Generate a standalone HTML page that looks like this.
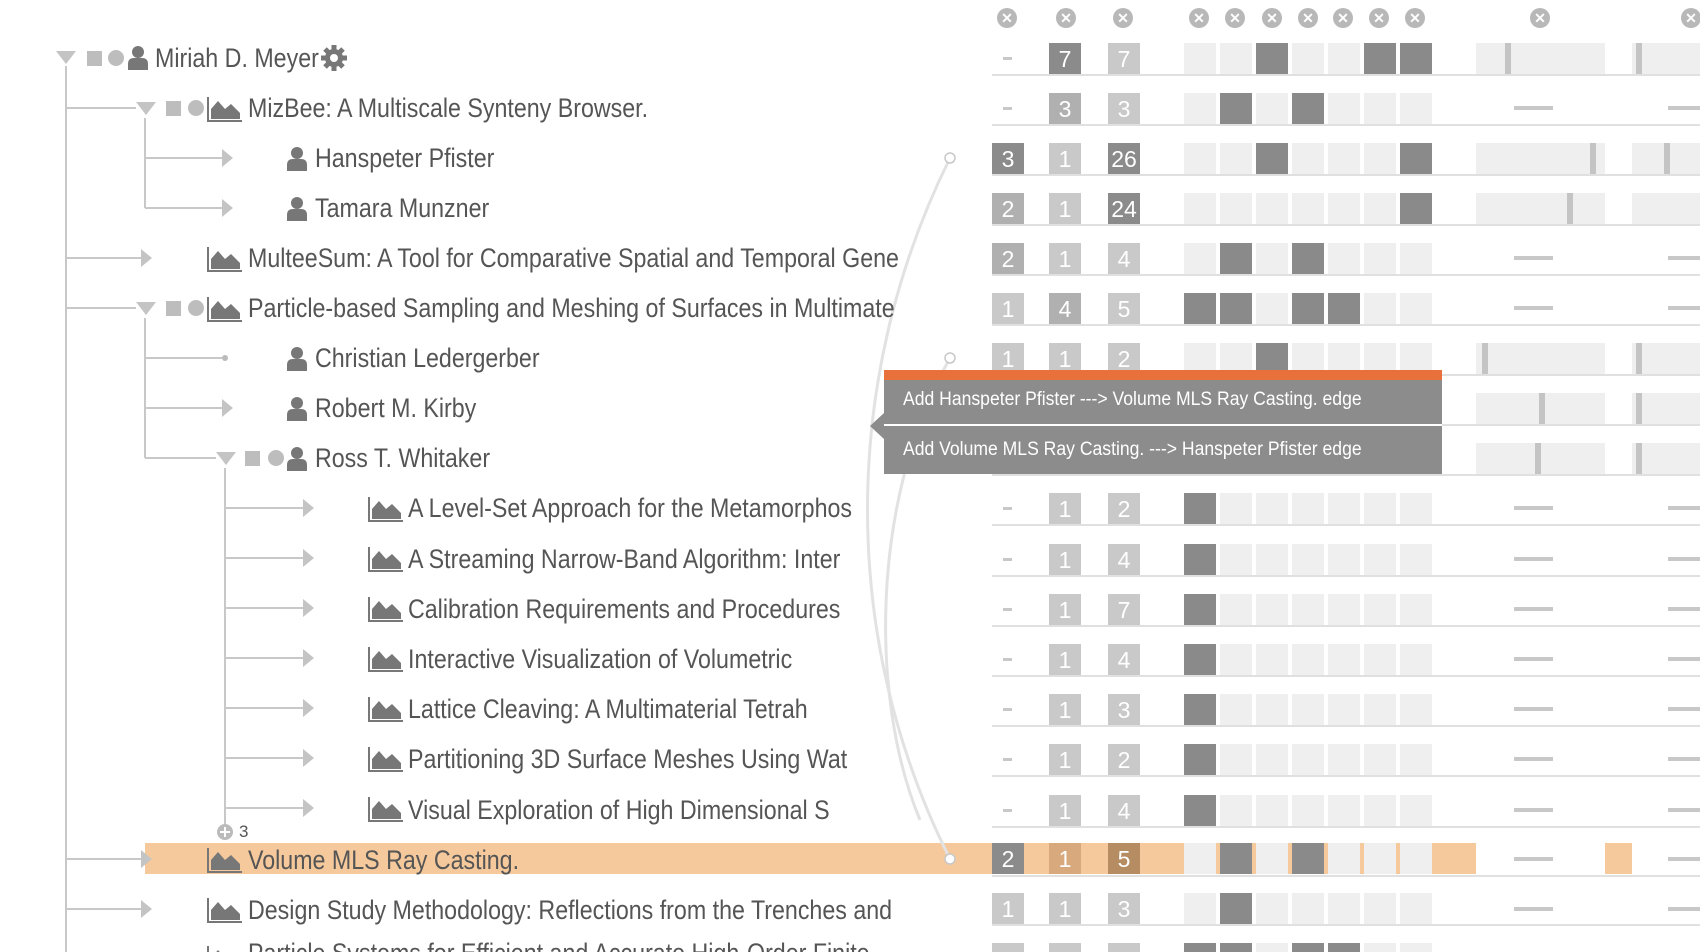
<!DOCTYPE html>
<html style="height:952px;overflow:hidden"><head><meta charset="utf-8"><style>
*{margin:0;padding:0;box-sizing:border-box}
body{width:1700px;height:952px;background:#fff;position:relative;overflow:hidden;font-family:"Liberation Sans Narrow","Liberation Sans",sans-serif;color:#555}
.a{position:absolute}
.t{position:absolute;font-size:27px;line-height:30px;white-space:nowrap;color:#555;transform:scaleX(0.86);transform-origin:0 50%}
.ar{position:absolute;width:0;height:0;border-top:9px solid transparent;border-bottom:9px solid transparent;border-left:11px solid #c4c4c4}
.dn{position:absolute;width:0;height:0;border-left:10px solid transparent;border-right:10px solid transparent;border-top:13px solid #c4c4c4}
.sq{position:absolute;width:15px;height:15px;background:#bdbdbd}
.ci{position:absolute;width:16px;height:16px;border-radius:50%;background:#bdbdbd}
.b{position:absolute;width:32px;height:31px;color:#fff;font-size:23px;line-height:33px;text-align:center}
.c{position:absolute;width:32px;height:31px;background:#efefef}
.d{background:#8a8a8a}
.L{background:#c9c9c9}.M{background:#b0b0b0}.D{background:#8b8b8b}
.ul{position:absolute;left:992px;width:708px;height:2px;background:#e0e0e0}
.rb{position:absolute;height:31px;background:#efefef}
.tk{position:absolute;width:6px;height:31px;background:#c4c4c4}
.ds{position:absolute;height:4px;background:#c8c8c8}
.mn{position:absolute;width:9px;height:3px;background:#c8c8c8}
.x{position:absolute;width:20px;height:20px;border-radius:50%;background:#b8b8b8;color:#fff;font:bold 14px/20px "Liberation Sans",sans-serif;text-align:center}
.tt{position:absolute;left:903px;color:#fff;font-size:19px;line-height:24px;white-space:nowrap;transform:scaleX(0.925);transform-origin:0 50%}
.lr{position:absolute;height:9px}
</style></head><body>

<div class="x" style="left:997px;top:8px">✕</div>
<div class="x" style="left:1056px;top:8px">✕</div>
<div class="x" style="left:1113px;top:8px">✕</div>
<div class="x" style="left:1189px;top:8px">✕</div>
<div class="x" style="left:1225px;top:8px">✕</div>
<div class="x" style="left:1262px;top:8px">✕</div>
<div class="x" style="left:1298px;top:8px">✕</div>
<div class="x" style="left:1333px;top:8px">✕</div>
<div class="x" style="left:1369px;top:8px">✕</div>
<div class="x" style="left:1405px;top:8px">✕</div>
<div class="x" style="left:1530px;top:8px">✕</div>
<div class="x" style="left:1681px;top:8px">✕</div>

<div class="a" style="left:145px;top:843px;width:1331px;height:31px;background:#f5c99c"></div>
<div class="a" style="left:1605px;top:843px;width:27px;height:31px;background:#f5c99c"></div>

<svg class="a" style="left:0;top:0" width="1700" height="952">
<path d="M950 158 C 840 380, 840 640, 950 859" fill="none" stroke="#e2e2e2" stroke-width="3"/>
<path d="M950 358 C 870 500, 870 700, 920 820" fill="none" stroke="#e2e2e2" stroke-width="3"/>
<circle cx="950" cy="158" r="5" fill="#fff" stroke="#c8c8c8" stroke-width="1.5"/>
<circle cx="950" cy="358" r="5" fill="#fff" stroke="#c8c8c8" stroke-width="1.5"/>
<circle cx="950" cy="859" r="5" fill="#fff" stroke="#c8c8c8" stroke-width="1.5"/>
<defs>
<g id="per"><circle cx="10" cy="6" r="6" fill="#777"/><path d="M0 24 V18 Q0 12 6 12 H14 Q20 12 20 18 V24 Z" fill="#777"/></g>
<g id="pap"><path d="M2 2 V26 H36" fill="none" stroke="#777" stroke-width="2"/><path d="M5 24 V14 L12 6 L19 14 L25 9 L34 18 V24 Z" fill="#777"/></g>
</defs>
<g stroke="#c8c8c8" stroke-width="2" fill="none">
<path d="M66 66 V952"/>
<path d="M66 108 H136 M66 258 H142 M66 308 H136 M66 859 H142 M66 909 H142 M145 118 V208 M145 158 H222 M145 208 H222 M145 318 V458 M145 358 H222 M145 408 H222 M145 458 H216 M225 468 V824 M225 508 H303 M225 558 H303 M225 608 H303 M225 658 H303 M225 708 H303 M225 758 H303 M225 808 H303"/>
</g>
<use href="#per" x="128" y="46"/>
<use href="#per" x="287" y="147"/>
<use href="#per" x="287" y="197"/>
<use href="#per" x="287" y="347"/>
<use href="#per" x="287" y="397"/>
<use href="#per" x="287" y="447"/>
<use href="#pap" x="206" y="95"/>
<use href="#pap" x="206" y="245"/>
<use href="#pap" x="206" y="295"/>
<use href="#pap" x="367" y="495"/>
<use href="#pap" x="367" y="545"/>
<use href="#pap" x="367" y="595"/>
<use href="#pap" x="367" y="645"/>
<use href="#pap" x="367" y="695"/>
<use href="#pap" x="367" y="745"/>
<use href="#pap" x="367" y="795"/>
<use href="#pap" x="206" y="846"/>
<use href="#pap" x="206" y="896"/>
<use href="#pap" x="206" y="944"/>
<g transform="translate(334 58)" fill="#777"><circle r="9"/><g stroke="#777" stroke-width="5"><path d="M0 -13 V13 M-13 0 H13 M-9 -9 L9 9 M-9 9 L9 -9"/></g><circle r="4" fill="#fff"/></g>
<circle cx="225" cy="832" r="8" fill="#bbb"/><path d="M220 832 H230 M225 827 V837" stroke="#fff" stroke-width="2"/>
</svg>

<div class="dn" style="left:56px;top:51px"></div>
<div class="dn" style="left:136px;top:102px"></div>
<div class="dn" style="left:136px;top:302px"></div>
<div class="dn" style="left:216px;top:452px"></div>
<div class="ar" style="left:141px;top:249px"></div>
<div class="ar" style="left:141px;top:850px"></div>
<div class="ar" style="left:141px;top:900px"></div>
<div class="ar" style="left:222px;top:149px"></div>
<div class="ar" style="left:222px;top:199px"></div>
<div class="ar" style="left:222px;top:399px"></div>
<div class="a" style="left:222px;top:355px;width:6px;height:6px;border-radius:50%;background:#bbb"></div>
<div class="ar" style="left:303px;top:499px"></div>
<div class="ar" style="left:303px;top:549px"></div>
<div class="ar" style="left:303px;top:599px"></div>
<div class="ar" style="left:303px;top:649px"></div>
<div class="ar" style="left:303px;top:699px"></div>
<div class="ar" style="left:303px;top:749px"></div>
<div class="ar" style="left:303px;top:799px"></div>
<div class="sq" style="left:87px;top:51px"></div><div class="ci" style="left:108px;top:50px"></div>
<div class="sq" style="left:166px;top:101px"></div><div class="ci" style="left:188px;top:100px"></div>
<div class="sq" style="left:166px;top:301px"></div><div class="ci" style="left:188px;top:300px"></div>
<div class="sq" style="left:245px;top:451px"></div><div class="ci" style="left:268px;top:450px"></div>

<div class="t" style="left:155px;top:43px">Miriah D. Meyer</div>
<div class="t" style="left:248px;top:93px">MizBee: A Multiscale Synteny Browser.</div>
<div class="t" style="left:315px;top:143px">Hanspeter Pfister</div>
<div class="t" style="left:315px;top:193px">Tamara Munzner</div>
<div class="t" style="left:248px;top:243px">MulteeSum: A Tool for Comparative Spatial and Temporal Gene</div>
<div class="t" style="left:248px;top:293px">Particle-based Sampling and Meshing of Surfaces in Multimate</div>
<div class="t" style="left:315px;top:343px">Christian Ledergerber</div>
<div class="t" style="left:315px;top:393px">Robert M. Kirby</div>
<div class="t" style="left:315px;top:443px">Ross T. Whitaker</div>
<div class="t" style="left:408px;top:493px">A Level-Set Approach for the Metamorphos</div>
<div class="t" style="left:408px;top:544px">A Streaming Narrow-Band Algorithm: Inter</div>
<div class="t" style="left:408px;top:594px">Calibration Requirements and Procedures</div>
<div class="t" style="left:408px;top:644px">Interactive Visualization of Volumetric</div>
<div class="t" style="left:408px;top:694px">Lattice Cleaving: A Multimaterial Tetrah</div>
<div class="t" style="left:408px;top:744px">Partitioning 3D Surface Meshes Using Wat</div>
<div class="t" style="left:408px;top:795px">Visual Exploration of High Dimensional S</div>
<div class="a" style="left:239px;top:822px;font-size:17px;color:#555">3</div>
<div class="t" style="left:248px;top:845px">Volume MLS Ray Casting.</div>
<div class="t" style="left:248px;top:895px">Design Study Methodology: Reflections from the Trenches and</div>
<div class="a" style="left:248px;top:942px;width:660px;height:10px;overflow:hidden"><div class="t" style="left:0;top:-4px">Particle Systems for Efficient and Accurate High-Order Finite</div></div>

<div class="mn" style="left:1003px;top:57px"></div><div class="b D" style="left:1049px;top:43px">7</div><div class="b L" style="left:1108px;top:43px">7</div>
<div class="c" style="left:1184px;top:43px"></div><div class="c" style="left:1220px;top:43px"></div><div class="c d" style="left:1256px;top:43px"></div><div class="c" style="left:1292px;top:43px"></div><div class="c" style="left:1328px;top:43px"></div><div class="c d" style="left:1364px;top:43px"></div><div class="c d" style="left:1400px;top:43px"></div>
<div class="rb" style="left:1476px;top:43px;width:129px"></div><div class="tk" style="left:1505px;top:43px"></div><div class="rb" style="left:1632px;top:43px;width:68px"></div><div class="tk" style="left:1636px;top:43px"></div>
<div class="ul" style="top:74px"></div>
<div class="mn" style="left:1003px;top:107px"></div><div class="b M" style="left:1049px;top:93px">3</div><div class="b L" style="left:1108px;top:93px">3</div>
<div class="c" style="left:1184px;top:93px"></div><div class="c d" style="left:1220px;top:93px"></div><div class="c" style="left:1256px;top:93px"></div><div class="c d" style="left:1292px;top:93px"></div><div class="c" style="left:1328px;top:93px"></div><div class="c" style="left:1364px;top:93px"></div><div class="c" style="left:1400px;top:93px"></div>
<div class="ds" style="left:1514px;top:106px;width:39px"></div><div class="ds" style="left:1668px;top:106px;width:32px"></div>
<div class="ul" style="top:124px"></div>
<div class="b D" style="left:992px;top:143px">3</div><div class="b L" style="left:1049px;top:143px">1</div><div class="b D" style="left:1108px;top:143px">26</div>
<div class="c" style="left:1184px;top:143px"></div><div class="c" style="left:1220px;top:143px"></div><div class="c d" style="left:1256px;top:143px"></div><div class="c" style="left:1292px;top:143px"></div><div class="c" style="left:1328px;top:143px"></div><div class="c" style="left:1364px;top:143px"></div><div class="c d" style="left:1400px;top:143px"></div>
<div class="rb" style="left:1476px;top:143px;width:129px"></div><div class="tk" style="left:1590px;top:143px"></div><div class="rb" style="left:1632px;top:143px;width:68px"></div><div class="tk" style="left:1664px;top:143px"></div>
<div class="ul" style="top:174px"></div>
<div class="b M" style="left:992px;top:193px">2</div><div class="b L" style="left:1049px;top:193px">1</div><div class="b D" style="left:1108px;top:193px">24</div>
<div class="c" style="left:1184px;top:193px"></div><div class="c" style="left:1220px;top:193px"></div><div class="c" style="left:1256px;top:193px"></div><div class="c" style="left:1292px;top:193px"></div><div class="c" style="left:1328px;top:193px"></div><div class="c" style="left:1364px;top:193px"></div><div class="c d" style="left:1400px;top:193px"></div>
<div class="rb" style="left:1476px;top:193px;width:129px"></div><div class="tk" style="left:1567px;top:193px"></div><div class="rb" style="left:1632px;top:193px;width:68px"></div>
<div class="ul" style="top:224px"></div>
<div class="b M" style="left:992px;top:243px">2</div><div class="b L" style="left:1049px;top:243px">1</div><div class="b L" style="left:1108px;top:243px">4</div>
<div class="c" style="left:1184px;top:243px"></div><div class="c d" style="left:1220px;top:243px"></div><div class="c" style="left:1256px;top:243px"></div><div class="c d" style="left:1292px;top:243px"></div><div class="c" style="left:1328px;top:243px"></div><div class="c" style="left:1364px;top:243px"></div><div class="c" style="left:1400px;top:243px"></div>
<div class="ds" style="left:1514px;top:256px;width:39px"></div><div class="ds" style="left:1668px;top:256px;width:32px"></div>
<div class="ul" style="top:274px"></div>
<div class="b L" style="left:992px;top:293px">1</div><div class="b M" style="left:1049px;top:293px">4</div><div class="b L" style="left:1108px;top:293px">5</div>
<div class="c d" style="left:1184px;top:293px"></div><div class="c d" style="left:1220px;top:293px"></div><div class="c" style="left:1256px;top:293px"></div><div class="c d" style="left:1292px;top:293px"></div><div class="c d" style="left:1328px;top:293px"></div><div class="c" style="left:1364px;top:293px"></div><div class="c" style="left:1400px;top:293px"></div>
<div class="ds" style="left:1514px;top:306px;width:39px"></div><div class="ds" style="left:1668px;top:306px;width:32px"></div>
<div class="ul" style="top:324px"></div>
<div class="b L" style="left:992px;top:343px">1</div><div class="b L" style="left:1049px;top:343px">1</div><div class="b L" style="left:1108px;top:343px">2</div>
<div class="c" style="left:1184px;top:343px"></div><div class="c" style="left:1220px;top:343px"></div><div class="c d" style="left:1256px;top:343px"></div><div class="c" style="left:1292px;top:343px"></div><div class="c" style="left:1328px;top:343px"></div><div class="c" style="left:1364px;top:343px"></div><div class="c" style="left:1400px;top:343px"></div>
<div class="rb" style="left:1476px;top:343px;width:129px"></div><div class="tk" style="left:1482px;top:343px"></div><div class="rb" style="left:1632px;top:343px;width:68px"></div><div class="tk" style="left:1636px;top:343px"></div>
<div class="ul" style="top:374px"></div>
<div class="rb" style="left:1476px;top:393px;width:129px"></div><div class="tk" style="left:1539px;top:393px"></div><div class="rb" style="left:1632px;top:393px;width:68px"></div><div class="tk" style="left:1636px;top:393px"></div>
<div class="ul" style="top:424px"></div>
<div class="rb" style="left:1476px;top:443px;width:129px"></div><div class="tk" style="left:1535px;top:443px"></div><div class="rb" style="left:1632px;top:443px;width:68px"></div><div class="tk" style="left:1636px;top:443px"></div>
<div class="ul" style="top:474px"></div>

<div class="mn" style="left:1003px;top:507px"></div><div class="b L" style="left:1049px;top:493px">1</div><div class="b L" style="left:1108px;top:493px">2</div>
<div class="c d" style="left:1184px;top:493px"></div><div class="c" style="left:1220px;top:493px"></div><div class="c" style="left:1256px;top:493px"></div><div class="c" style="left:1292px;top:493px"></div><div class="c" style="left:1328px;top:493px"></div><div class="c" style="left:1364px;top:493px"></div><div class="c" style="left:1400px;top:493px"></div>
<div class="ds" style="left:1514px;top:506px;width:39px"></div><div class="ds" style="left:1668px;top:506px;width:32px"></div><div class="ul" style="top:524px"></div>

<div class="mn" style="left:1003px;top:558px"></div><div class="b L" style="left:1049px;top:544px">1</div><div class="b L" style="left:1108px;top:544px">4</div>
<div class="c d" style="left:1184px;top:544px"></div><div class="c" style="left:1220px;top:544px"></div><div class="c" style="left:1256px;top:544px"></div><div class="c" style="left:1292px;top:544px"></div><div class="c" style="left:1328px;top:544px"></div><div class="c" style="left:1364px;top:544px"></div><div class="c" style="left:1400px;top:544px"></div>
<div class="ds" style="left:1514px;top:557px;width:39px"></div><div class="ds" style="left:1668px;top:557px;width:32px"></div><div class="ul" style="top:575px"></div>

<div class="mn" style="left:1003px;top:608px"></div><div class="b L" style="left:1049px;top:594px">1</div><div class="b L" style="left:1108px;top:594px">7</div>
<div class="c d" style="left:1184px;top:594px"></div><div class="c" style="left:1220px;top:594px"></div><div class="c" style="left:1256px;top:594px"></div><div class="c" style="left:1292px;top:594px"></div><div class="c" style="left:1328px;top:594px"></div><div class="c" style="left:1364px;top:594px"></div><div class="c" style="left:1400px;top:594px"></div>
<div class="ds" style="left:1514px;top:607px;width:39px"></div><div class="ds" style="left:1668px;top:607px;width:32px"></div><div class="ul" style="top:625px"></div>

<div class="mn" style="left:1003px;top:658px"></div><div class="b L" style="left:1049px;top:644px">1</div><div class="b L" style="left:1108px;top:644px">4</div>
<div class="c d" style="left:1184px;top:644px"></div><div class="c" style="left:1220px;top:644px"></div><div class="c" style="left:1256px;top:644px"></div><div class="c" style="left:1292px;top:644px"></div><div class="c" style="left:1328px;top:644px"></div><div class="c" style="left:1364px;top:644px"></div><div class="c" style="left:1400px;top:644px"></div>
<div class="ds" style="left:1514px;top:657px;width:39px"></div><div class="ds" style="left:1668px;top:657px;width:32px"></div><div class="ul" style="top:675px"></div>

<div class="mn" style="left:1003px;top:708px"></div><div class="b L" style="left:1049px;top:694px">1</div><div class="b L" style="left:1108px;top:694px">3</div>
<div class="c d" style="left:1184px;top:694px"></div><div class="c" style="left:1220px;top:694px"></div><div class="c" style="left:1256px;top:694px"></div><div class="c" style="left:1292px;top:694px"></div><div class="c" style="left:1328px;top:694px"></div><div class="c" style="left:1364px;top:694px"></div><div class="c" style="left:1400px;top:694px"></div>
<div class="ds" style="left:1514px;top:707px;width:39px"></div><div class="ds" style="left:1668px;top:707px;width:32px"></div><div class="ul" style="top:725px"></div>

<div class="mn" style="left:1003px;top:758px"></div><div class="b L" style="left:1049px;top:744px">1</div><div class="b L" style="left:1108px;top:744px">2</div>
<div class="c d" style="left:1184px;top:744px"></div><div class="c" style="left:1220px;top:744px"></div><div class="c" style="left:1256px;top:744px"></div><div class="c" style="left:1292px;top:744px"></div><div class="c" style="left:1328px;top:744px"></div><div class="c" style="left:1364px;top:744px"></div><div class="c" style="left:1400px;top:744px"></div>
<div class="ds" style="left:1514px;top:757px;width:39px"></div><div class="ds" style="left:1668px;top:757px;width:32px"></div><div class="ul" style="top:775px"></div>

<div class="mn" style="left:1003px;top:809px"></div><div class="b L" style="left:1049px;top:795px">1</div><div class="b L" style="left:1108px;top:795px">4</div>
<div class="c d" style="left:1184px;top:795px"></div><div class="c" style="left:1220px;top:795px"></div><div class="c" style="left:1256px;top:795px"></div><div class="c" style="left:1292px;top:795px"></div><div class="c" style="left:1328px;top:795px"></div><div class="c" style="left:1364px;top:795px"></div><div class="c" style="left:1400px;top:795px"></div>
<div class="ds" style="left:1514px;top:808px;width:39px"></div><div class="ds" style="left:1668px;top:808px;width:32px"></div><div class="ul" style="top:826px"></div>

<div class="b D" style="left:992px;top:843px">2</div><div class="b" style="left:1049px;top:843px;background:#d7a97c">1</div><div class="b" style="left:1108px;top:843px;background:#b68c62">5</div>
<div class="c" style="left:1184px;top:843px"></div><div class="c d" style="left:1220px;top:843px"></div><div class="c" style="left:1256px;top:843px"></div><div class="c d" style="left:1292px;top:843px"></div><div class="c" style="left:1328px;top:843px"></div><div class="c" style="left:1364px;top:843px"></div><div class="c" style="left:1400px;top:843px"></div>
<div class="a" style="left:1436px;top:843px;width:40px;height:31px;background:#f5c99c"></div>
<div class="a" style="left:1476px;top:843px;width:129px;height:31px;background:#fff"></div>
<div class="ds" style="left:1514px;top:857px;width:39px"></div><div class="ds" style="left:1668px;top:857px;width:32px"></div><div class="ul" style="top:875px"></div>

<div class="b L" style="left:992px;top:893px">1</div><div class="b L" style="left:1049px;top:893px">1</div><div class="b L" style="left:1108px;top:893px">3</div>
<div class="c" style="left:1184px;top:893px"></div><div class="c d" style="left:1220px;top:893px"></div><div class="c" style="left:1256px;top:893px"></div><div class="c" style="left:1292px;top:893px"></div><div class="c" style="left:1328px;top:893px"></div><div class="c" style="left:1364px;top:893px"></div><div class="c" style="left:1400px;top:893px"></div>
<div class="ds" style="left:1514px;top:907px;width:39px"></div><div class="ds" style="left:1668px;top:907px;width:32px"></div><div class="ul" style="top:924px"></div>
<div class="lr L" style="left:992px;top:943px;width:32px"></div><div class="lr L" style="left:1049px;top:943px;width:32px"></div><div class="lr L" style="left:1108px;top:943px;width:32px"></div>
<div class="lr d" style="left:1184px;top:943px;width:32px"></div><div class="lr d" style="left:1220px;top:943px;width:32px"></div><div class="lr" style="left:1256px;top:943px;width:32px;background:#efefef"></div><div class="lr d" style="left:1292px;top:943px;width:32px"></div><div class="lr d" style="left:1328px;top:943px;width:32px"></div><div class="lr" style="left:1364px;top:943px;width:32px;background:#efefef"></div><div class="lr" style="left:1400px;top:943px;width:32px;background:#efefef"></div>

<div class="a" style="left:884px;top:370px;width:558px;height:104px;background:#8c8c8c"></div>
<div class="a" style="left:884px;top:370px;width:558px;height:10px;background:#e8703a"></div>
<div class="a" style="left:884px;top:424px;width:558px;height:2px;background:#fff"></div>
<div class="a" style="left:870px;top:413px;width:0;height:0;border-top:13px solid transparent;border-bottom:13px solid transparent;border-right:14px solid #8c8c8c"></div>
<div class="tt" style="top:388px">Add Hanspeter Pfister ---&gt; Volume MLS Ray Casting. edge</div>
<div class="tt" style="top:438px">Add Volume MLS Ray Casting. ---&gt; Hanspeter Pfister edge</div>
</body></html>
